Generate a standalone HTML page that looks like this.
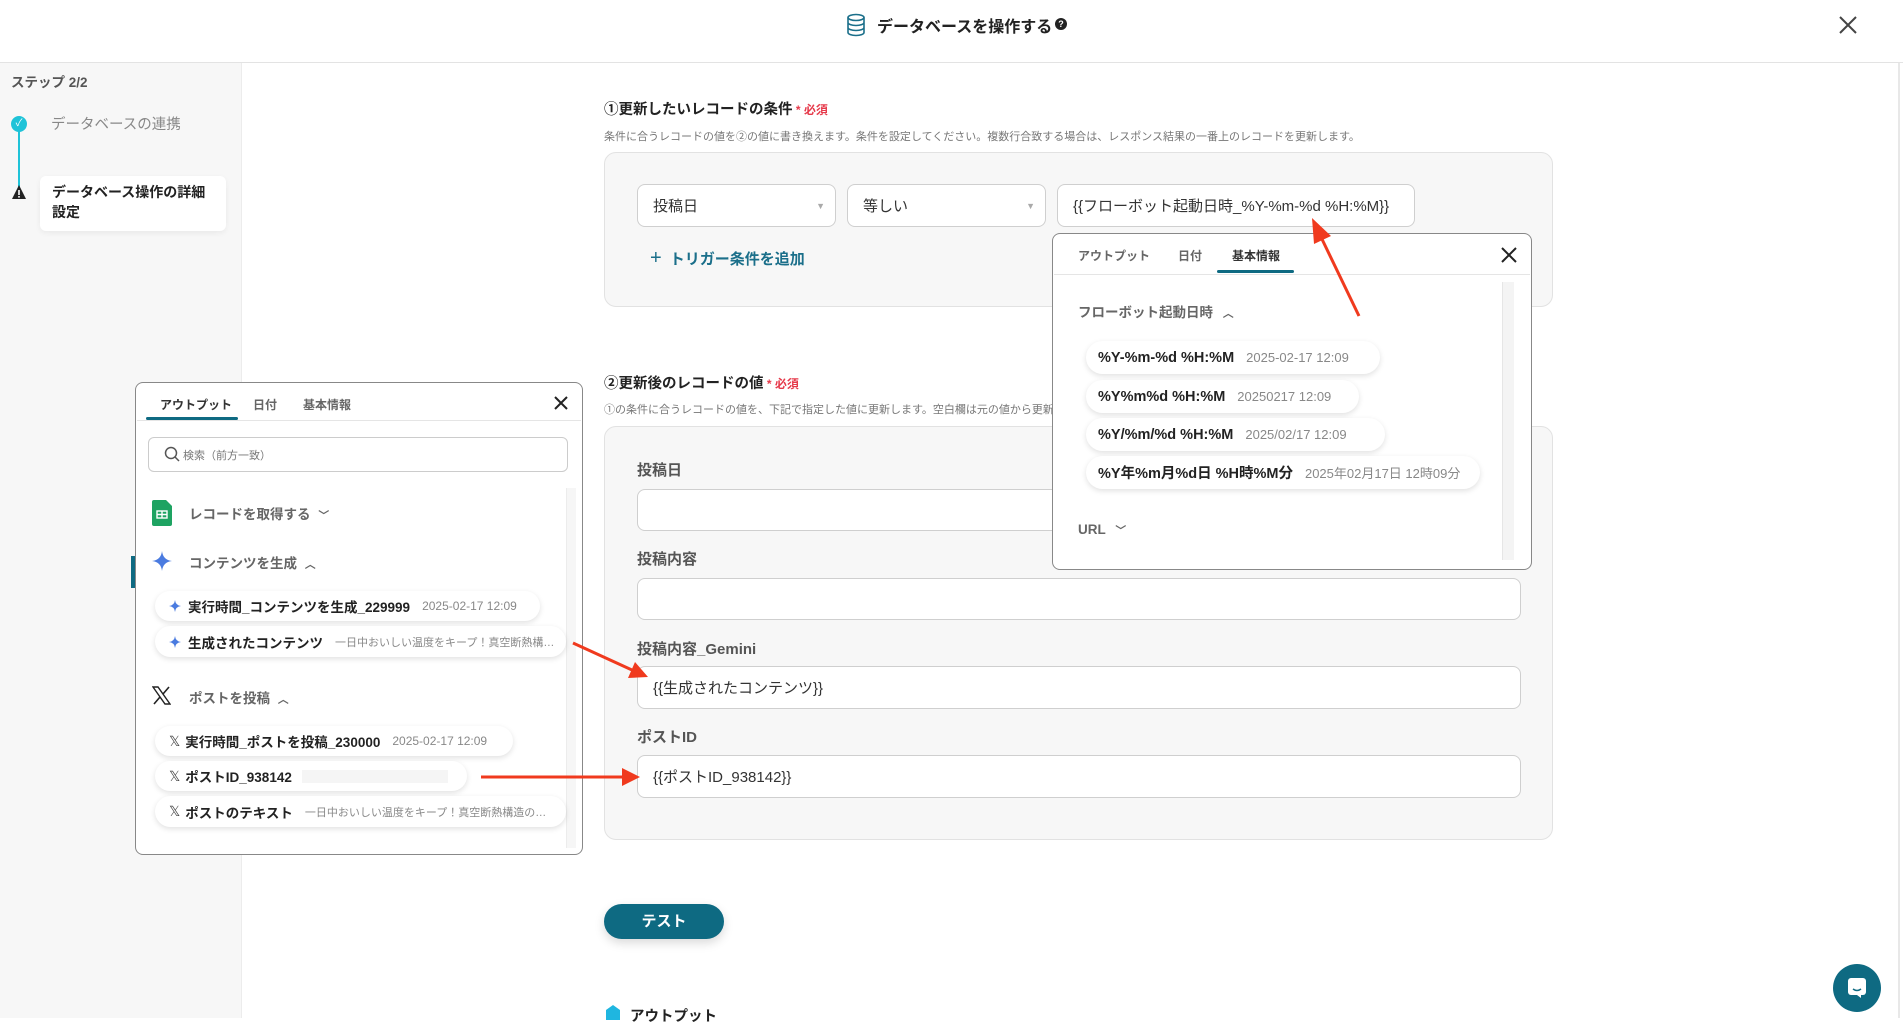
<!DOCTYPE html>
<html><head><meta charset="utf-8"><style>
*{box-sizing:border-box;margin:0;padding:0}
body{width:1903px;height:1018px;overflow:hidden;background:#fff;font-family:"Liberation Sans","Noto Sans CJK JP",sans-serif;color:#333;position:relative}
.a{position:absolute}
.hdr{left:0;top:0;width:1903px;height:63px;border-bottom:1px solid #e3e3e3;background:#fff}
.side{left:0;top:63px;width:242px;height:955px;background:#f7f7f7;border-right:1px solid #ececec}
.box{background:#f7f7f7;border:1px solid #e2e2e2;border-radius:12px}
.inp{background:#fff;border:1px solid #cfcfcf;border-radius:8px;font-size:15px;color:#333;padding-left:15px;display:flex;align-items:center}
.lbl{font-size:15px;color:#555;font-weight:bold}
.h{font-size:14.5px;font-weight:bold;color:#222}
.req{color:#e6394a;font-size:12px;font-weight:bold}
.desc{font-size:11px;color:#777}
.pop{background:#fff;border:1.5px solid #888;border-radius:8px}
.chip{background:#fff;border-radius:18px;box-shadow:0 2px 6px rgba(0,0,0,.12);display:flex;align-items:center;white-space:nowrap;overflow:hidden}
.chip b{font-size:14.5px;color:#222}
.chip span{font-size:13px;color:#888;margin-left:12px}
.tab{font-size:12px;color:#666;font-weight:bold}
.sec{font-size:13.5px;color:#666;font-weight:bold}
</style></head><body>
<div class="a hdr"></div>
<svg class="a" style="left:846px;top:13px" width="20" height="24" viewBox="0 0 20 24"><g fill="none" stroke="#1b6f8a" stroke-width="1.6"><ellipse cx="10" cy="4.5" rx="8" ry="3"/><path d="M2 4.5v15c0 1.7 3.6 3 8 3s8-1.3 8-3v-15M2 9.5c0 1.7 3.6 3 8 3s8-1.3 8-3M2 14.5c0 1.7 3.6 3 8 3s8-1.3 8-3"/></g></svg>
<div class="a" style="left:877px;top:13px;font-size:16px;font-weight:bold;color:#222">データベースを操作する</div>
<div class="a" style="left:1055px;top:18px;width:12px;height:12px;border-radius:50%;background:#222;color:#fff;font-size:9px;text-align:center;line-height:12px;font-weight:bold">?</div>
<svg class="a" style="left:1839px;top:16px" width="18" height="18"><path d="M1 1L17 17M17 1L1 17" stroke="#444" stroke-width="2"/></svg>
<div class="a" style="left:1898px;top:63px;width:2px;height:955px;background:#e8e8e8"></div>

<div class="a side"></div>
<div class="a" style="left:11px;top:71px;font-size:13.5px;font-weight:bold;color:#555">ステップ 2/2</div>
<div class="a" style="left:18px;top:124px;width:2px;height:68px;background:#1fc3d8"></div>
<div class="a" style="left:11px;top:116px;width:16px;height:16px;border-radius:50%;background:#1fc3d8;color:#fff;font-size:10px;text-align:center;line-height:16px">✓</div>
<div class="a" style="left:51px;top:113px;font-size:14.5px;color:#888">データベースの連携</div>
<svg class="a" style="left:11px;top:184px" width="16" height="16"><path d="M8 1L15 15H1Z" fill="#222"/><rect x="7.2" y="6" width="1.6" height="5" fill="#fff"/><rect x="7.2" y="12" width="1.6" height="1.6" fill="#fff"/></svg>
<div class="a" style="left:40px;top:176px;width:186px;height:55px;background:#fff;border-radius:6px;box-shadow:0 2px 6px rgba(0,0,0,.06);padding:6px 12px;font-size:14px;font-weight:bold;color:#222;line-height:20px">データベース操作の詳細<br>設定</div>
<div class="a" style="left:131px;top:556px;width:4px;height:32px;background:#0e6a82"></div>

<div class="a h" style="left:604px;top:98px">①更新したいレコードの条件<span class="req"> * 必須</span></div>
<div class="a desc" style="left:604px;top:128px">条件に合うレコードの値を②の値に書き換えます。条件を設定してください。複数行合致する場合は、レスポンス結果の一番上のレコードを更新します。</div>
<div class="a box" style="left:604px;top:152px;width:949px;height:155px"></div>
<div class="a inp" style="left:637px;top:184px;width:199px;height:43px">投稿日<span style="position:absolute;right:10px;color:#aaa;font-size:9px">▼</span></div>
<div class="a inp" style="left:847px;top:184px;width:199px;height:43px">等しい<span style="position:absolute;right:10px;color:#aaa;font-size:9px">▼</span></div>
<div class="a inp" style="left:1057px;top:184px;width:358px;height:43px">{{フローボット起動日時_%Y-%m-%d %H:%M}}</div>
<div class="a" style="left:650px;top:247px;font-size:15px;font-weight:bold;color:#1b6f8a"><span style="font-size:20px;font-weight:normal;margin-right:8px">+</span>トリガー条件を追加</div>

<div class="a h" style="left:604px;top:372px">②更新後のレコードの値<span class="req"> * 必須</span></div>
<div class="a desc" style="left:604px;top:401px">①の条件に合うレコードの値を、下記で指定した値に更新します。空白欄は元の値から更新されません。</div>
<div class="a box" style="left:604px;top:426px;width:949px;height:414px"></div>
<div class="a lbl" style="left:637px;top:459px">投稿日</div>
<div class="a inp" style="left:637px;top:489px;width:884px;height:42px"></div>
<div class="a lbl" style="left:637px;top:548px">投稿内容</div>
<div class="a inp" style="left:637px;top:578px;width:884px;height:42px"></div>
<div class="a lbl" style="left:637px;top:638px">投稿内容_Gemini</div>
<div class="a inp" style="left:637px;top:666px;width:884px;height:43px">{{生成されたコンテンツ}}</div>
<div class="a lbl" style="left:637px;top:726px">ポストID</div>
<div class="a inp" style="left:637px;top:755px;width:884px;height:43px">{{ポストID_938142}}</div>

<div class="a" style="left:604px;top:904px;width:120px;height:35px;border-radius:18px;background:#0e6a82;color:#fff;font-size:15px;font-weight:bold;text-align:center;line-height:35px;box-shadow:0 4px 10px rgba(0,0,0,.15)">テスト</div>
<svg class="a" style="left:604px;top:1004px" width="18" height="16"><path d="M9 1L16 6V16H2V6Z" fill="#1fb6e0"/></svg>
<div class="a" style="left:630px;top:1005px;font-size:14.5px;font-weight:bold;color:#222">アウトプット</div>
<div class="a" style="left:1833px;top:964px;width:48px;height:48px;border-radius:50%;background:#0e6a82"></div>
<svg class="a" style="left:1847px;top:977px" width="20" height="22"><rect x="1" y="1" width="18" height="17" rx="3" fill="#fff"/><path d="M14 18v3l-4-3" fill="#fff"/><path d="M6 12q4 3 8 0" stroke="#0e6a82" stroke-width="1.5" fill="none"/></svg>

<!-- right popup -->
<div class="a pop" style="left:1052px;top:233px;width:480px;height:337px"></div>
<div class="a tab" style="left:1078px;top:247px">アウトプット</div>
<div class="a tab" style="left:1178px;top:247px">日付</div>
<div class="a tab" style="left:1232px;top:247px;color:#333">基本情報</div>
<div class="a" style="left:1217px;top:270px;width:77px;height:3px;background:#0e6a82;border-radius:2px"></div>
<div class="a" style="left:1054px;top:274px;width:476px;height:1px;background:#e5e5e5"></div>
<svg class="a" style="left:1501px;top:247px" width="16" height="16"><path d="M1 1L15 15M15 1L1 15" stroke="#222" stroke-width="2"/></svg>
<div class="a" style="left:1502px;top:282px;width:12px;height:278px;background:#f4f4f4;border-left:1px solid #e6e6e6"></div>
<div class="a sec" style="left:1078px;top:301px">フローボット起動日時 <span style="font-size:11px;margin-left:6px">︿</span></div>
<div class="a chip" style="left:1086px;top:341px;width:294px;height:33px;padding-left:12px"><b>%Y-%m-%d %H:%M</b><span>2025-02-17 12:09</span></div>
<div class="a chip" style="left:1086px;top:380px;width:273px;height:33px;padding-left:12px"><b>%Y%m%d %H:%M</b><span>20250217 12:09</span></div>
<div class="a chip" style="left:1086px;top:418px;width:299px;height:33px;padding-left:12px"><b>%Y/%m/%d %H:%M</b><span>2025/02/17 12:09</span></div>
<div class="a chip" style="left:1086px;top:456px;width:394px;height:33px;padding-left:12px"><b>%Y年%m月%d日 %H時%M分</b><span>2025年02月17日 12時09分</span></div>
<div class="a sec" style="left:1078px;top:522px">URL <span style="font-size:11px;margin-left:6px">﹀</span></div>

<!-- left popup -->
<div class="a pop" style="left:135px;top:382px;width:448px;height:473px"></div>
<div class="a tab" style="left:160px;top:396px;color:#333">アウトプット</div>
<div class="a tab" style="left:253px;top:396px">日付</div>
<div class="a tab" style="left:303px;top:396px">基本情報</div>
<div class="a" style="left:146px;top:417px;width:92px;height:3px;background:#0e6a82;border-radius:2px"></div>
<div class="a" style="left:137px;top:420px;width:444px;height:1px;background:#e5e5e5"></div>
<svg class="a" style="left:554px;top:396px" width="14" height="14"><path d="M1 1L13 13M13 1L1 13" stroke="#222" stroke-width="2"/></svg>
<div class="a" style="left:148px;top:437px;width:420px;height:35px;border:1px solid #ccc;border-radius:6px"></div>
<svg class="a" style="left:164px;top:446px" width="16" height="16"><circle cx="7" cy="7" r="5.5" stroke="#555" stroke-width="1.5" fill="none"/><path d="M11 11L15 15" stroke="#555" stroke-width="1.5"/></svg>
<div class="a" style="left:183px;top:447px;font-size:11px;color:#777">検索（前方一致）</div>
<div class="a" style="left:566px;top:488px;width:10px;height:360px;background:#f6f6f6;border-left:1px solid #ececec"></div>
<svg class="a" style="left:152px;top:500px" width="20" height="26"><path d="M0 2a2 2 0 012-2h12l6 6v18a2 2 0 01-2 2H2a2 2 0 01-2-2z" fill="#1ea362"/><rect x="5" y="11" width="10" height="7" fill="none" stroke="#fff" stroke-width="1.4"/><path d="M10 11v7M5 14.5h10" stroke="#fff" stroke-width="1.4"/></svg>
<div class="a sec" style="left:189px;top:503px">レコードを取得する <span style="font-size:11px;margin-left:4px">﹀</span></div>
<svg class="a" style="left:152px;top:551px" width="20" height="20"><path d="M10 0Q11 9 20 10Q11 11 10 20Q9 11 0 10Q9 9 10 0Z" fill="#4a7be0"/></svg>
<div class="a sec" style="left:189px;top:552px">コンテンツを生成 <span style="font-size:11px;margin-left:4px">︿</span></div>
<div class="a chip" style="left:155px;top:591px;width:385px;height:30px;padding-left:14px"><svg width="12" height="12"><path d="M6 0Q6.6 5.4 12 6Q6.6 6.6 6 12Q5.4 6.6 0 6Q5.4 5.4 6 0Z" fill="#4a7be0"/></svg><b style="margin-left:7px;font-size:13.5px">実行時間_コンテンツを生成_229999</b><span style="font-size:12px">2025-02-17 12:09</span></div>
<div class="a chip" style="left:155px;top:626px;width:411px;height:31px;padding-left:14px"><svg width="12" height="12"><path d="M6 0Q6.6 5.4 12 6Q6.6 6.6 6 12Q5.4 6.6 0 6Q5.4 5.4 6 0Z" fill="#4a7be0"/></svg><b style="margin-left:7px;font-size:13.5px">生成されたコンテンツ</b><span style="font-size:11px">一日中おいしい温度をキープ！真空断熱構…</span></div>
<svg class="a" style="left:152px;top:686px" width="19" height="19"><path d="M1 1h5l12 17h-5z" fill="none" stroke="#222" stroke-width="1.4"/><path d="M17 1L11 8M8 11L2 18" stroke="#222" stroke-width="1.6"/></svg>
<div class="a sec" style="left:189px;top:687px">ポストを投稿 <span style="font-size:11px;margin-left:4px">︿</span></div>
<div class="a chip" style="left:155px;top:726px;width:358px;height:30px;padding-left:14px"><span style="margin:0;color:#444;font-size:14px">𝕏</span><b style="margin-left:5px;font-size:13.5px">実行時間_ポストを投稿_230000</b><span style="font-size:12px">2025-02-17 12:09</span></div>
<div class="a chip" style="left:155px;top:761px;width:312px;height:30px;padding-left:14px"><span style="margin:0;color:#444;font-size:14px">𝕏</span><b style="margin-left:5px;font-size:13.5px">ポストID_938142</b><i style="margin-left:10px;width:146px;height:13px;background:#f5f5f5;display:inline-block"></i></div>
<div class="a chip" style="left:155px;top:796px;width:411px;height:31px;padding-left:14px"><span style="margin:0;color:#444;font-size:14px">𝕏</span><b style="margin-left:5px;font-size:13.5px">ポストのテキスト</b><span style="font-size:11px">一日中おいしい温度をキープ！真空断熱構造の…</span></div>

<!-- arrows -->
<svg class="a" style="left:0;top:0" width="1903" height="1018">
<g stroke="#f03a1e" stroke-width="3" fill="#f03a1e">
<line x1="1359" y1="316" x2="1320" y2="235"/><path d="M1312 218L1331 236L1314 244Z" stroke="none"/>
<line x1="573" y1="643" x2="632" y2="670"/><path d="M648 677L628 678L635 662Z" stroke="none"/>
<line x1="481" y1="777" x2="624" y2="777"/><path d="M640 777L622 768L622 786Z" stroke="none"/>
</g></svg>
</body></html>
